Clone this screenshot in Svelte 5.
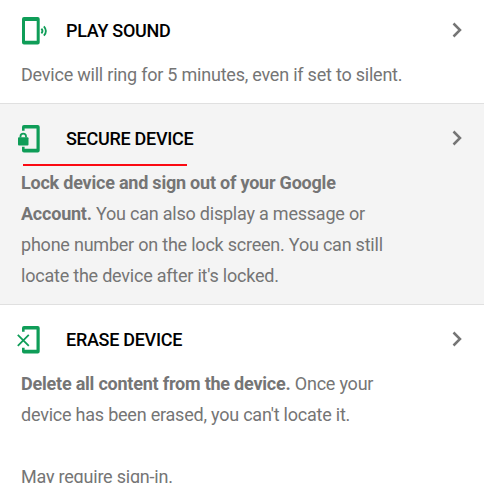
<script lang="ts">
  type Action = {
    id: "ring" | "lock" | "erase";
    title: string;
    lead?: string;
    text: string;
    note?: string;
    active?: boolean;
  };

  const actions: Action[] = [
    { id: "ring", title: "PLAY SOUND", text: "Device will ring for 5 minutes, even if set to silent." },
    {
      id: "lock",
      title: "SECURE DEVICE",
      lead: "Lock device and sign out of your Google Account.",
      text: "You can also display a message or phone number on the lock screen. You can still locate the device after it's locked.",
      active: true,
    },
    {
      id: "erase",
      title: "ERASE DEVICE",
      lead: "Delete all content from the device.",
      text: "Once your device has been erased, you can't locate it.",
      note: "May require sign-in.",
    },
  ];
</script>

<main>
  {#each actions as a (a.id)}
    <section class:active={a.active}>
      <header>
        <svg class="icon" viewBox="0 0 34 30" width="34" height="30">
          {#if a.id === "ring"}
            <path
              fill-rule="evenodd"
              d="M8 1h13.7a2 2 0 0 1 2 2v23.5a2 2 0 0 1-2 2H8a2 2 0 0 1-2-2V3a2 2 0 0 1 2-2zM9 5v19.7h11.7V5z"
            />
            <path class="line" d="M25.4 12.6q2.2 2.4 0 4.8M27.9 10.3q4 4.7 0 9.4" />
          {:else}
            <path d="M8 1h13.7a2 2 0 0 1 2 2v23.5a2 2 0 0 1-2 2H8a2 2 0 0 1-2-2V22.7h2.6v2h11.9V4.5H8.6v2.2H6V3a2 2 0 0 1 2-2z" />
            {#if a.id === "lock"}
              <rect x="2" y="13.2" width="10.5" height="8.2" rx="1" />
              <path class="line" d="M4.5 13.5v-1.2a2.75 2.75 0 0 1 5.5 0v1.2" />
            {:else}
              <path class="line" d="M1.8 9.9l11 11M12.8 9.9l-11 11" />
            {/if}
          {/if}
        </svg>
        <h2>{a.title}</h2>
        <svg class="chevron" viewBox="0 0 12 16" width="12" height="16">
          <path d="M2.5 1.5L9 8l-6.500 6.500" />
        </svg>
        {#if a.active}<span class="underline"></span>{/if}
      </header>
      <p>{#if a.lead}<b>{a.lead}</b>{" "}{/if}{a.text}</p>
      {#if a.note}<p class="note">{a.note}</p>{/if}
    </section>
  {/each}
</main>

<style>
  :global(body) {
    background: #fff;
  }
  main {
    height: 483px;
    overflow: hidden;
    font-family: Roboto, "Liberation Sans", sans-serif;
    font-size: 18px;
    letter-spacing: -0.22px;
    color: #757575;
  }
  section {
    padding: 13px 21px;
    border-top: 1px solid #e0e0e0;
  }
  section:first-child {
    padding-top: 9px;
    border-top: 0;
  }
  .active {
    background: #f4f4f4;
  }
  header {
    position: relative;
    display: flex;
    align-items: center;
    height: 44px;
    margin-bottom: 6px;
  }
  .icon {
    flex: none;
    margin-left: -5px;
    fill: #0f9d58;
  }
  .line {
    fill: none;
    stroke: #0f9d58;
    stroke-width: 1.8;
  }
  h2 {
    flex: 1;
    margin: 0 0 2px 16px;
    font-size: 18px;
    font-weight: 500;
    letter-spacing: -0.29px;
    color: #000;
  }
  .chevron {
    margin-bottom: 2px;
    fill: none;
    stroke: #757575;
    stroke-width: 2.5;
  }
  .underline {
    position: absolute;
    left: 2px;
    bottom: -5px;
    width: 164px;
    height: 2px;
    background: #fb0a12;
  }
  p {
    max-width: 385px;
    margin: 0;
    line-height: 31px;
  }
  .note {
    margin-top: 31px;
  }
</style>
